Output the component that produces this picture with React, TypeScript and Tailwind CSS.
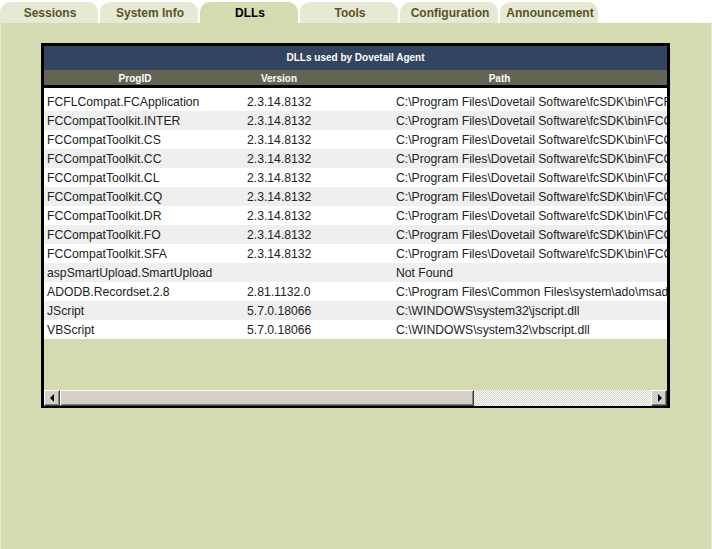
import React from "react";

const tabs = ["Sessions", "System Info", "DLLs", "Tools", "Configuration", "Announcement"];

const rows: [string, string, string][] = [
  ["FCFLCompat.FCApplication", "2.3.14.8132", "C:\\Program Files\\Dovetail Software\\fcSDK\\bin\\FCFLCompat.dll"],
  ["FCCompatToolkit.INTER", "2.3.14.8132", "C:\\Program Files\\Dovetail Software\\fcSDK\\bin\\FCCompatToolkit.dll"],
  ["FCCompatToolkit.CS", "2.3.14.8132", "C:\\Program Files\\Dovetail Software\\fcSDK\\bin\\FCCompatToolkit.dll"],
  ["FCCompatToolkit.CC", "2.3.14.8132", "C:\\Program Files\\Dovetail Software\\fcSDK\\bin\\FCCompatToolkit.dll"],
  ["FCCompatToolkit.CL", "2.3.14.8132", "C:\\Program Files\\Dovetail Software\\fcSDK\\bin\\FCCompatToolkit.dll"],
  ["FCCompatToolkit.CQ", "2.3.14.8132", "C:\\Program Files\\Dovetail Software\\fcSDK\\bin\\FCCompatToolkit.dll"],
  ["FCCompatToolkit.DR", "2.3.14.8132", "C:\\Program Files\\Dovetail Software\\fcSDK\\bin\\FCCompatToolkit.dll"],
  ["FCCompatToolkit.FO", "2.3.14.8132", "C:\\Program Files\\Dovetail Software\\fcSDK\\bin\\FCCompatToolkit.dll"],
  ["FCCompatToolkit.SFA", "2.3.14.8132", "C:\\Program Files\\Dovetail Software\\fcSDK\\bin\\FCCompatToolkit.dll"],
  ["aspSmartUpload.SmartUpload", "", "Not Found"],
  ["ADODB.Recordset.2.8", "2.81.1132.0", "C:\\Program Files\\Common Files\\system\\ado\\msado15.dll"],
  ["JScript", "5.7.0.18066", "C:\\WINDOWS\\system32\\jscript.dll"],
  ["VBScript", "5.7.0.18066", "C:\\WINDOWS\\system32\\vbscript.dll"],
];

function Btn({ dir }: { dir: "l" | "r" }) {
  return (
    <div className="w-[16px] h-[16px] shrink-0 bg-[#d4d0c8] border border-t-white border-l-white border-r-[#404040] border-b-[#404040] shadow-[inset_-1px_-1px_#808080] flex items-center justify-center">
      {dir === "l" ? (
        <div className="w-0 h-0 border-y-[4px] border-y-transparent border-r-[4px] border-r-black mr-[1px]" />
      ) : (
        <div className="w-0 h-0 border-y-[4px] border-y-transparent border-l-[4px] border-l-black ml-[1px]" />
      )}
    </div>
  );
}

export default function App() {
  return (
    <div className="w-[712px] h-[549px] bg-white flex flex-col overflow-hidden font-['Liberation_Sans',Arial,sans-serif]">
      <div className="h-[23px] pt-[2px] flex">
        {tabs.map((t) => (
          <div key={t} className="w-[100px] shrink-0 pr-[2px]">
            <div
              className={
                t === "DLLs"
                  ? "h-[21px] rounded-t-[10px] bg-[#d5dbb0] text-black text-[12px] font-bold flex items-center justify-center pl-[2px]"
                  : "h-[21px] rounded-t-[10px] bg-[#e6e9d3] text-[#5b5325] text-[12px] font-bold flex items-center justify-center pl-[2px]"
              }
            >
              {t}
            </div>
          </div>
        ))}
      </div>
      <div className="flex-1 bg-[#d5dbb0] border-x border-[#e8ebd9] pt-[20px] pl-[40px]">
        <div className="w-[629px] border-[3px] border-b-[2px] border-black">
          <div className="h-[24px] pb-[1px] bg-[#334460] text-white text-[10px] font-bold flex items-center justify-center">
            DLLs used by Dovetail Agent
          </div>
          <div className="h-[18px] pt-[1px] bg-[#646452] border-b-[3px] border-black flex text-white text-[10px] font-bold">
            <div className="w-[182px] flex items-center justify-center">ProgID</div>
            <div className="w-[106px] flex items-center justify-center">Version</div>
            <div className="flex-1 flex items-center justify-center">Path</div>
          </div>
          <div className="h-[302px] overflow-hidden">
            <div className="w-[900px] text-[12.2px] text-[#222]">
              {rows.map((r, i) => (
                <div
                  key={r[0]}
                  className={
                    (i % 2 === 0 ? "bg-white " : "bg-[#efefef] ") +
                    (i === 0 ? "h-[23px] pt-[6px] " : "h-[19px] pt-[2px] ") +
                    "flex items-center whitespace-nowrap leading-[17px]"
                  }
                >
                  <div className="w-[200px] pl-[3px] shrink-0">{r[0]}</div>
                  <div className="w-[149px] pl-[3px] shrink-0">{r[1]}</div>
                  <div className="flex-1 pl-[3px]">{r[2]}</div>
                </div>
              ))}
            </div>
          </div>
          <div className="h-[16px] flex">
            <Btn dir="l" />
            <div className="w-[414px] shrink-0 h-[16px] bg-[#d4d0c8] border border-t-white border-l-white border-r-[#404040] border-b-[#404040] shadow-[inset_-1px_-1px_#808080]" />
            <div className="flex-1 h-[16px] bg-[repeating-conic-gradient(#d4d0c8_0%_25%,#ffffff_0%_50%)] bg-[length:2px_2px]" />
            <Btn dir="r" />
          </div>
        </div>
      </div>
    </div>
  );
}
